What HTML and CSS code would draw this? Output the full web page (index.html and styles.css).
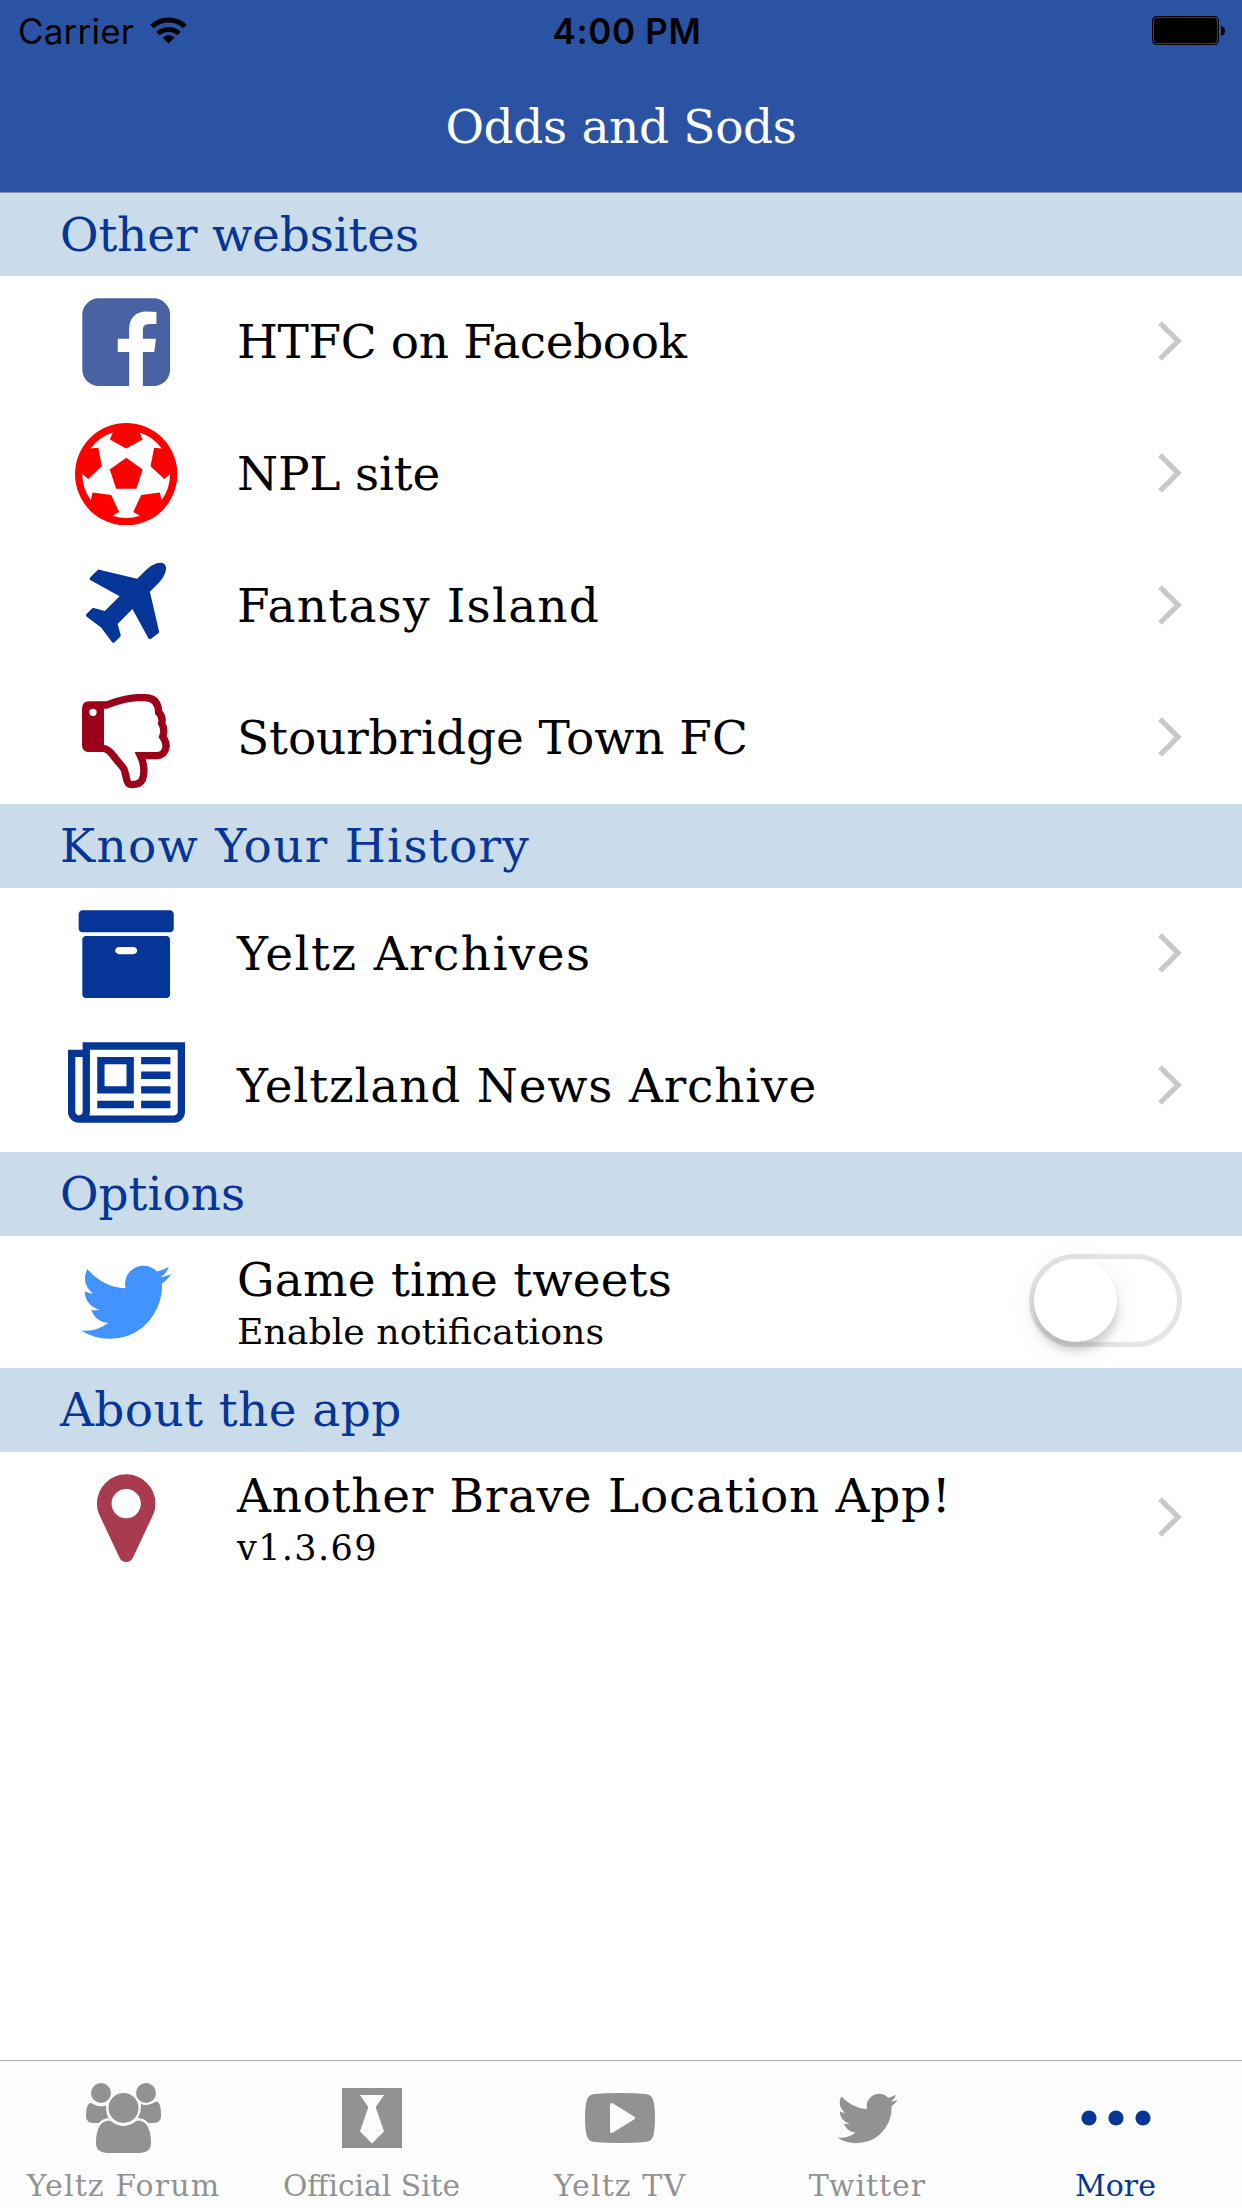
FILE: index.html
```html
<!DOCTYPE html>
<html lang="en">
<head>
<meta charset="utf-8">
<title>Odds and Sods</title>
<link rel="stylesheet" href="styles.css">
</head>
<body>
<svg class="defs" aria-hidden="true">
  <symbol id="twitter" viewBox="0 0 1792 1792"><path d="M1684 408q-67 98-162 167 1 14 1 42 0 130-38 259.5t-115.5 248.5-184.5 210.5-258 146-323 54.5q-271 0-496-145 35 4 78 4 225 0 401-138-105-2-188-64.5t-114-159.5q33 5 61 5 43 0 85-11-112-23-185.5-111.5t-73.5-205.5v-4q68 38 146 41-66-44-105-115t-39-154q0-88 44-163 121 149 294.5 238.5t371.5 99.5q-8-38-8-74 0-134 94.5-228.5t228.5-94.5q140 0 236 102 109-21 205-78-37 115-142 178 93-10 186-50z"/></symbol>
  <symbol id="chevron" viewBox="0 0 24 40"><path d="M2 2L20 20L2 38" fill="none" stroke="#c7c7cc" stroke-width="5.300"/></symbol>
</svg>
<div class="screen">
  <header class="header">
    <div class="status">
      <div class="status-left">
        <span class="carrier">Carrier</span>
        <svg class="wifi" viewBox="0 0 37 28"><g fill="none" stroke="#000" stroke-width="5"><path d="M2 10.500A24 24 0 0 1 35 10.500"/><path d="M7.800 17.500A16 16 0 0 1 29.200 17.500"/></g><path d="M12.500 21.500Q18.500 16.500 24.500 21.500L18.500 27.500z"/></svg>
      </div>
      <span class="time">4:00 PM</span>
      <div class="status-right">
        <svg class="battery" viewBox="0 0 74 30"><rect x=".6" y=".6" width="65.800" height="27.800" rx="4" fill="none" stroke="#000" stroke-width="1.200"/><rect x="2" y="2" width="63" height="25" rx="3"/><path d="M69 10Q73 11 73 15Q73 19 69 20z"/></svg>
      </div>
    </div>
    <h1 class="title">Odds and Sods</h1>
  </header>

  <main class="list">
    <h2 class="band t-other">Other websites</h2>
    <div class="row">
      <div class="icon"><svg class="fa" viewBox="0 0 1792 1792" fill="#4862a3"><path d="M1376 128q119 0 203.500 84.500t84.500 203.500v960q0 119-84.500 203.500t-203.500 84.500h-188v-595h199l30-232h-229v-148q0-56 23.500-84t91.500-28l122-1v-207q-63-9-178-9-136 0-217.500 80t-81.500 226v171h-200v232h200v595h-532q-119 0-203.500-84.500t-84.500-203.500v-960q0-119 84.500-203.500t203.500-84.500h960z"/></svg></div>
      <div class="text"><span class="label t-htfc">HTFC on Facebook</span></div>
      <svg class="chevron"><use href="#chevron"/></svg>
    </div>
    <div class="row">
      <div class="icon"><svg class="fa" viewBox="0 0 1792 1792" fill="#f00"><path d="M609 816l287-208 287 208-109 336h-355zm287-816q182 0 348 71t286 191 191 286 71 348-71 348-191 286-286 191-348 71-348-71-286-191-191-286-71-348 71-348 191-286 286-191 348-71zm619 1350q149-203 149-454v-3l-102 89-240-224 63-323 134 12q-150-206-389-282l53 124-287 159-287-159 53-124q-239 76-389 282l135-12 62 323-240 224-102-89v3q0 251 149 454l30-132 326 40 139 298-116 69q117 39 240 39t240-39l-116-69 139-298 326-40z"/></svg></div>
      <div class="text"><span class="label t-npl">NPL site</span></div>
      <svg class="chevron"><use href="#chevron"/></svg>
    </div>
    <div class="row">
      <div class="icon"><svg class="fa" viewBox="0 0 1792 1792" fill="#053596"><path d="M1568 160q44 52 12 148t-108 172l-161 161 160 696q5 19-12 33l-128 96q-7 6-19 6-4 0-7-1-15-3-21-16l-279-508-259 259 53 194q5 17-8 31l-96 96q-9 9-23 9h-2q-15-2-24-13l-189-252-252-189q-11-7-13-23-1-13 9-25l96-97q9-9 23-9 6 0 8 1l194 53 259-259-508-279q-14-8-17-24-2-16 9-27l128-128q14-13 30-8l665 159 160-160q76-76 172-108t148 12z"/></svg></div>
      <div class="text"><span class="label t-fantasy">Fantasy Island</span></div>
      <svg class="chevron"><use href="#chevron"/></svg>
    </div>
    <div class="row">
      <div class="icon"><svg class="thumb" viewBox="0 -6 360 360"><path fill="#9d0019" fill-rule="evenodd" d="M114 64H70Q48 64 48 86V194Q48 216 70 216H114zM92 97A11 11 0 1 0 70 97A11 11 0 1 0 92 97z"/><path fill="none" stroke="#9d0019" stroke-width="22" d="M112 75H122C150 65 180 53 215 53H237C264 53 277 68 278 97C287 106 290 119 287 130C294 142 295 157 290 170C311 199 296 227 272 227H223C237 257 236 280 229 299C223 311 211 314 198 314C178 314 183 288 174 268C169 257 159 250 149 236C141 226 130 206 112 205"/></svg></div>
      <div class="text"><span class="label t-stour">Stourbridge Town FC</span></div>
      <svg class="chevron"><use href="#chevron"/></svg>
    </div>

    <h2 class="band t-know">Know Your History</h2>
    <div class="row">
      <div class="icon"><svg class="fa" viewBox="0 0 1792 1792" fill="#053596"><path d="M1088 832q0-26-19-45t-45-19h-256q-26 0-45 19t-19 45 19 45 45 19h256q26 0 45-19t19-45zm576-192v960q0 26-19 45t-45 19h-1408q-26 0-45-19t-19-45v-960q0-26 19-45t45-19h1408q26 0 45 19t19 45zm64-448v256q0 26-19 45t-45 19h-1536q-26 0-45-19t-19-45v-256q0-26 19-45t45-19h1536q26 0 45 19t19 45z"/></svg></div>
      <div class="text"><span class="label t-archives">Yeltz Archives</span></div>
      <svg class="chevron"><use href="#chevron"/></svg>
    </div>
    <div class="row">
      <div class="icon"><svg class="fa wide" viewBox="0 0 2048 1792" fill="#053596"><path d="M1024 512h-384v384h384v-384zm128 640v128h-640v-128h640zm0-768v640h-640v-640h640zm640 768v128h-512v-128h512zm0-256v128h-512v-128h512zm0-256v128h-512v-128h512zm0-256v128h-512v-128h512zm-1536 960v-960h-128v960q0 26 19 45t45 19 45-19 19-45zm1664 0v-1088h-1536v1088q0 33-11 64h1483q26 0 45-19t19-45zm128-1216v1216q0 80-56 136t-136 56h-1664q-80 0-136-56t-56-136v-1088h256v-128h1792z"/></svg></div>
      <div class="text"><span class="label t-news">Yeltzland News Archive</span></div>
      <svg class="chevron"><use href="#chevron"/></svg>
    </div>

    <h2 class="band t-options">Options</h2>
    <div class="row">
      <div class="icon"><svg class="fa" fill="#4293ff"><use href="#twitter"/></svg></div>
      <div class="text"><span class="label t-game">Game time tweets</span><span class="sub t-enable">Enable notifications</span></div>
      <div class="switch"><div class="knob"></div></div>
    </div>

    <h2 class="band t-about">About the app</h2>
    <div class="row">
      <div class="icon"><svg class="fa" viewBox="0 0 1792 1792" fill="#a93b4f"><path d="M1152 640q0-106-75-181t-181-75-181 75-75 181 75 181 181 75 181-75 75-181zm256 0q0 109-33 179l-364 774q-16 33-47.500 52t-67.500 19-67.500-19-46.500-52l-365-774q-33-70-33-179 0-212 150-362t362-150 362 150 150 362z"/></svg></div>
      <div class="text"><span class="label t-another">Another Brave Location App!</span><span class="sub t-version">v1.3.69</span></div>
      <svg class="chevron"><use href="#chevron"/></svg>
    </div>
  </main>

  <nav class="tabs">
    <div class="tab">
      <div class="tab-icon"><svg width="75" height="70" viewBox="-64 0 1920 1792"><path d="M529 896q-162 5-265 128h-134q-82 0-138-40.500t-56-118.500q0-353 124-353 6 0 43.500 21t97.500 42.500 119 21.500q67 0 133-23-5 37-5 66 0 159 81 293zm1071 637q0 120-73 189.500t-194 69.500h-874q-121 0-194-69.500t-73-189.500q0-53 3.500-103.500t14-109 26.500-108.500 43-97.500 62-81 85.500-53.500 111.500-20q10 0 43 21.500t73 48 107 48 135 21.500 135-21.500 107-48 73-48 43-21.500q61 0 111.500 20t85.500 53.500 62 81 43 97.500 26.500 108.500 14 109 3.500 103.500zm-1024-1277q0 106-75 181t-181 75-181-75-75-181 75-181 181-75 181 75 75 181zm704 384q0 159-112.500 271.500t-271.500 112.500-271.500-112.500-112.500-271.500 112.500-271.500 271.500-112.500 271.500 112.500 112.500 271.500zm576 225q0 78-56 118.500t-138 40.500h-134q-103-123-265-128 81-134 81-293 0-29-5-66 66 23 133 23 59 0 119-21.500t97.500-42.500 43.500-21q124 0 124 353zm-128-609q0 106-75 181t-181 75-181-75-75-181 75-181 181-75 181 75 75 181z"/></svg></div>
      <span class="tab-label t-forum">Yeltz Forum</span>
    </div>
    <div class="tab">
      <div class="tab-icon"><svg width="60" height="60" viewBox="0 0 60 60"><path fill-rule="evenodd" d="M0 0H60V60H0zM18 7H42L33.700 19L42 43.500L30 55.500L18 43.500L26.300 19z"/></svg></div>
      <span class="tab-label t-official">Official Site</span>
    </div>
    <div class="tab">
      <div class="tab-icon"><svg width="70" height="50" viewBox="0 0 70 50"><path fill-rule="evenodd" d="M35 0Q49 0 61 1Q67 2 68.500 8Q70 15 70 25Q70 35 68.500 42Q67 48 61 49Q49 50 35 50Q21 50 9 49Q3 48 1.500 42Q0 35 0 25Q0 15 1.500 8Q3 2 9 1Q21 0 35 0zM25 12V38Q25 41 28 39.500L49 26.500Q51 25 49 23.500L28 10.500Q25 9 25 12z"/></svg></div>
      <span class="tab-label t-tv">Yeltz TV</span>
    </div>
    <div class="tab">
      <div class="tab-icon"><svg width="69" height="69"><use href="#twitter"/></svg></div>
      <span class="tab-label t-twitter">Twitter</span>
    </div>
    <div class="tab active">
      <div class="tab-icon"><svg width="70" height="16" viewBox="0 0 70 16"><circle cx="8" cy="8" r="7.600"/><circle cx="35" cy="8" r="7.600"/><circle cx="62" cy="8" r="7.600"/></svg></div>
      <span class="tab-label t-more">More</span>
    </div>
  </nav>
</div>
</body>
</html>
```
FILE: styles.css
```css
* { box-sizing: border-box; }
body { margin: 0; background: #fff; }
.defs { position: absolute; width: 0; height: 0; }

.screen {
  width: 1242px;
  height: 2208px;
  display: flex;
  flex-direction: column;
  overflow: hidden;
  font-family: "DejaVu Serif", serif;
  color: #000;
}
h1, h2 { margin: 0; font-weight: 400; }

.header {
  height: 193px;
  background: #2a53a4;
  border-bottom: 1px solid #8b8f98;
}
.status {
  height: 60px;
  display: grid;
  grid-template-columns: 1fr auto 1fr;
  align-items: start;
  font-family: Inter, "Liberation Sans", sans-serif;
  line-height: 62px;
}
.status-left { display: flex; padding-left: 18px; gap: 16px; }
.carrier { width: 116px; font-size: 35px; letter-spacing: .2px; white-space: nowrap; }
.wifi { width: 37px; height: 28px; margin-top: 16px; }
.time { font-size: 35px; font-weight: 600; letter-spacing: .7px; padding-left: 12px; }
.status-right { display: flex; justify-content: flex-end; padding-right: 16px; }
.battery { width: 74px; height: 30px; margin-top: 16px; }
.title {
  font-size: 47px;
  line-height: 134px;
  height: 132px;
  text-align: center;
  letter-spacing: -.35px;
  color: #fff;
}

.list { flex: 1; }
.band {
  height: 84px;
  line-height: 84px;
  padding-left: 60px;
  background: #cadbea;
  color: #053596;
  font-size: 47px;
  white-space: nowrap;
}
.band:first-child { height: 83px; line-height: 83px; }
.row {
  height: 132px;
  display: flex;
  align-items: center;
  padding: 0 60px 0 66px;
}
.icon { width: 120px; margin-right: 51px; display: flex; justify-content: center; }
.fa { width: 102.400px; height: 102.400px; flex: none; }
.wide { width: 117px; }
.thumb { width: 120px; height: 120px; }
.text { flex: 1; display: flex; flex-direction: column; white-space: nowrap; }
.label { font-size: 47px; line-height: 60px; }
.sub { font-size: 35px; line-height: 44px; }
.chevron { width: 24px; height: 40px; margin-bottom: 3px; }

.t-other { letter-spacing: -.15px; }
.t-htfc { letter-spacing: -.4px; }
.t-npl { letter-spacing: -.2px; }
.t-fantasy { letter-spacing: 1.2px; }
.t-stour { letter-spacing: -.1px; }
.t-know { letter-spacing: 1.3px; }
.t-archives { letter-spacing: 1.4px; }
.t-news { letter-spacing: .8px; }
.t-game { letter-spacing: .2px; }
.t-enable { font-size: 36.300px; }
.t-about { letter-spacing: .4px; }
.t-another { letter-spacing: .7px; }
.t-version { letter-spacing: 1.4px; }

.switch {
  width: 153px;
  height: 93px;
  margin-bottom: 3px;
  border: 5px solid #e5e5e5;
  border-radius: 47px;
}
.knob {
  width: 83px;
  height: 83px;
  border-radius: 50%;
  background: #fff;
  box-shadow: 0 9px 9px rgba(0, 0, 0, .16), 0 5px 30px rgba(0, 0, 0, .08);
}

.tabs {
  height: 148px;
  border-top: 1px solid #b0b0b0;
  background: #fdfdfd;
  display: grid;
  grid-template-columns: 247px 249px 248px 247px 249px;
  color: #929292;
  fill: #929292;
}
.tab { display: flex; flex-direction: column; align-items: center; }
.tab-icon { height: 70px; margin-top: 22px; display: flex; align-items: center; }
.tab-label { font-size: 30px; line-height: 36px; margin-top: 15px; white-space: nowrap; }
.t-forum { letter-spacing: 1.1px; }
.t-official { font-size: 29.700px; }
.t-tv { letter-spacing: 1.1px; }
.t-twitter { letter-spacing: 1px; }
.active { color: #053596; fill: #053596; }
```
